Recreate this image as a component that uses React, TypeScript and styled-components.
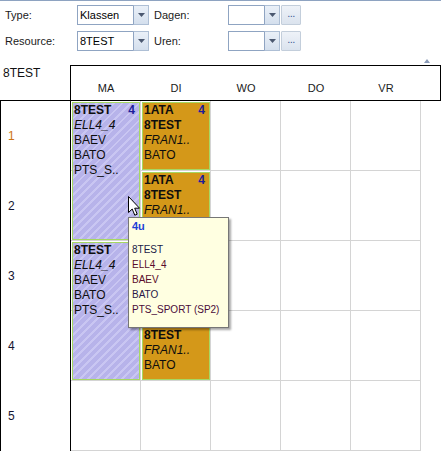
import styled, { createGlobalStyle } from "styled-components";

const GlobalStyle = createGlobalStyle`
  body {
    margin: 0;
    background: #ffffff;
    font-family: "Liberation Sans", Arial, sans-serif;
  }
`;

type Lesson = {
  id: number;
  col: number;
  row: number;
  span: number;
  kind: "class" | "lesson";
  lines: { text: string; bold?: boolean; italic?: boolean; count?: string }[];
};

const LESSONS: Lesson[] = [
  {
    id: 1,
    col: 1,
    row: 1,
    span: 2,
    kind: "class",
    lines: [
      { text: "8TEST", bold: true, count: "4" },
      { text: "ELL4_4", italic: true },
      { text: "BAEV" },
      { text: "BATO" },
      { text: "PTS_S.." },
    ],
  },
  {
    id: 2,
    col: 1,
    row: 3,
    span: 2,
    kind: "class",
    lines: [
      { text: "8TEST", bold: true, count: "4" },
      { text: "ELL4_4", italic: true },
      { text: "BAEV" },
      { text: "BATO" },
      { text: "PTS_S.." },
    ],
  },
  ...[1, 2, 3, 4].map((row) => ({
    id: 10 + row,
    col: 2,
    row,
    span: 1,
    kind: "lesson" as const,
    lines: [
      { text: "1ATA", bold: true, count: "4" },
      { text: "8TEST", bold: true },
      { text: "FRAN1..", italic: true },
      { text: "BATO" },
    ],
  })),
];

const DAYS = ["MA", "DI", "WO", "DO", "VR"];
const HOURS = [1, 2, 3, 4, 5];

const TIP_LINES = [
  { text: "8TEST", color: "#1c1c48" },
  { text: "ELL4_4", color: "#5a0c2c" },
  { text: "BAEV", color: "#5a0c2c" },
  { text: "BATO", color: "#2a1848" },
  { text: "PTS_SPORT (SP2)", color: "#4a0c3a" },
];

function Combo({ value, width }: { value: string; width: number }) {
  return (
    <ComboWrap>
      <ComboInput $width={width}>{value}</ComboInput>
      <DropButton>
        <svg width="7" height="4" viewBox="0 0 7 4">
          <path d="M0 0 H7 L3.5 4 Z" fill="#4b5870" />
        </svg>
      </DropButton>
    </ComboWrap>
  );
}

function App() {
  return (
    <Page>
      <GlobalStyle />
      <Toolbar>
        <FieldRow>
          <FieldLabel $width={72}>Type:</FieldLabel>
          <Combo value="Klassen" width={56} />
          <FieldLabel $width={74} $gap={5}>
            Dagen:
          </FieldLabel>
          <Combo value="" width={36} />
          <EllipsisButton>...</EllipsisButton>
        </FieldRow>
        <FieldRow>
          <FieldLabel $width={72}>Resource:</FieldLabel>
          <Combo value="8TEST" width={56} />
          <FieldLabel $width={74} $gap={5}>
            Uren:
          </FieldLabel>
          <Combo value="" width={36} />
          <EllipsisButton>...</EllipsisButton>
        </FieldRow>
      </Toolbar>

      <HeaderRow>
        <Corner>8TEST</Corner>
        <DaysBox>
          {DAYS.map((d) => (
            <DayLabel key={d}>{d}</DayLabel>
          ))}
        </DaysBox>
      </HeaderRow>

      <Body>
        <RowLabels>
          {HOURS.map((h) => (
            <RowLabel key={h} $color={h === 1 ? "#cc7412" : "#141430"}>
              {h}
            </RowLabel>
          ))}
        </RowLabels>
        <Grid>
          {HOURS.map((r) =>
            DAYS.map((d, c) => <Cell key={d + r} $col={c + 1} $row={r} />)
          )}
          {LESSONS.map((l) => (
            <Block key={l.id} $col={l.col} $row={l.row} $span={l.span} $kind={l.kind}>
              {l.lines.map((line, i) => (
                <BlockLine key={i} $bold={line.bold} $italic={line.italic}>
                  <span>{line.text}</span>
                  {line.count && <Count>{line.count}</Count>}
                </BlockLine>
              ))}
            </Block>
          ))}
        </Grid>
      </Body>

      <ScrollHint>
        <svg width="6" height="4" viewBox="0 0 6 4">
          <path d="M0 4 L3 0 L6 4 Z" fill="#8a9bb8" />
        </svg>
      </ScrollHint>

      <Tooltip>
        <TipTitle>4u</TipTitle>
        {TIP_LINES.map((t) => (
          <TipLine key={t.text} $color={t.color}>
            {t.text}
          </TipLine>
        ))}
      </Tooltip>

      <Cursor>
        <svg width="13" height="21" viewBox="0 0 13 21">
          <path
            d="M0.5 0.5 L0.5 16.5 L4.2 13 L6.8 19.2 L9.2 18.2 L6.7 12.2 L11.5 12.2 Z"
            fill="#ffffff"
            stroke="#000000"
            strokeWidth="1"
            strokeLinejoin="miter"
          />
        </svg>
      </Cursor>
    </Page>
  );
}

export default App;

const Page = styled.div`
  position: relative;
  width: 441px;
  height: 451px;
  overflow: hidden;
  background: #ffffff;
  color: #111111;
`;

const Toolbar = styled.div`
  box-sizing: border-box;
  height: 57px;
  border-top: 1px solid #8ea3c1;
  padding: 4px 0 0 5px;
  display: flex;
  flex-direction: column;
  gap: 6px;
`;

const FieldRow = styled.div`
  display: flex;
  align-items: center;
  height: 20px;
`;

const FieldLabel = styled.div<{ $width: number; $gap?: number }>`
  width: ${(p) => p.$width}px;
  margin-left: ${(p) => p.$gap ?? 0}px;
  font-size: 11px;
  color: #1b1b1b;
`;

const ComboWrap = styled.div`
  display: flex;
  height: 20px;
`;

const ComboInput = styled.div<{ $width: number }>`
  box-sizing: border-box;
  width: ${(p) => p.$width}px;
  height: 20px;
  border: 1px solid #8fa4c2;
  border-right: none;
  padding-left: 2px;
  font-size: 11px;
  line-height: 18px;
  color: #000000;
  background: #ffffff;
`;

const DropButton = styled.div`
  box-sizing: border-box;
  width: 16px;
  height: 20px;
  border: 1px solid #aebfd5;
  border-left: 1px solid #8fa4c2;
  background: linear-gradient(#eaf0f8, #d4dfed);
  display: flex;
  align-items: center;
  justify-content: center;
`;

const EllipsisButton = styled.div`
  box-sizing: border-box;
  width: 20px;
  height: 20px;
  margin-left: 1px;
  border: 1px solid #c3cedb;
  border-radius: 1px;
  background: linear-gradient(#eef2f8, #dbe3ee);
  font-size: 11px;
  line-height: 14px;
  text-align: center;
  color: #3d5c96;
  letter-spacing: -0.5px;
`;

const HeaderRow = styled.div`
  display: flex;
  align-items: flex-end;
  height: 44px;
`;

const Corner = styled.div`
  box-sizing: border-box;
  width: 70px;
  height: 44px;
  border-bottom: 1px solid #000000;
  padding: 9px 0 0 3px;
  font-size: 12px;
`;

const DaysBox = styled.div`
  box-sizing: border-box;
  width: 371px;
  height: 36px;
  border: 1px solid #000000;
  display: flex;
`;

const DayLabel = styled.div`
  width: 70px;
  padding-top: 16px;
  text-align: center;
  font-size: 11px;
  color: #1a1a1a;
`;

const Body = styled.div`
  display: flex;
`;

const RowLabels = styled.div`
  box-sizing: border-box;
  width: 71px;
  border-left: 1px solid #000000;
  border-right: 1px solid #000000;
  display: grid;
  grid-template-rows: repeat(5, 70px);
`;

const RowLabel = styled.div<{ $color: string }>`
  display: flex;
  align-items: center;
  padding-left: 7px;
  font-size: 12px;
  color: ${(p) => p.$color};
`;

const Grid = styled.div`
  display: grid;
  grid-template-columns: repeat(5, 70px);
  grid-template-rows: repeat(5, 70px);
`;

const Cell = styled.div<{ $col: number; $row: number }>`
  grid-column: ${(p) => p.$col};
  grid-row: ${(p) => p.$row};
  border-right: 1px solid #d4d4d4;
  border-bottom: 1px solid #d4d4d4;
`;

const Block = styled.div<{ $col: number; $row: number; $span: number; $kind: "class" | "lesson" }>`
  grid-column: ${(p) => p.$col};
  grid-row: ${(p) => p.$row} / span ${(p) => p.$span};
  z-index: 1;
  margin: 1px 1px 1px 1px;
  border: 1px solid #a6d862;
  padding: 0 4px 0 1px;
  overflow: hidden;
  font-size: 12px;
  line-height: 15px;
  color: #0e0e0e;
  background: ${(p) =>
    p.$kind === "class"
      ? "repeating-linear-gradient(135deg, #b7b3ea 0px, #b7b3ea 4px, #c9c6f2 4px, #c9c6f2 6px)"
      : "#d49819"};
`;

const BlockLine = styled.div<{ $bold?: boolean; $italic?: boolean }>`
  display: flex;
  justify-content: space-between;
  white-space: nowrap;
  font-weight: ${(p) => (p.$bold ? 700 : 400)};
  font-style: ${(p) => (p.$italic ? "italic" : "normal")};
`;

const Count = styled.span`
  color: #1c1c9a;
  font-weight: 700;
`;

const ScrollHint = styled.div`
  position: absolute;
  left: 424px;
  top: 58px;
  line-height: 0;
`;

const Tooltip = styled.div`
  position: absolute;
  left: 128px;
  top: 217px;
  z-index: 5;
  box-sizing: border-box;
  width: 101px;
  height: 111px;
  border: 1px solid #767676;
  background: #ffffe1;
  box-shadow: 2px 2px 2px rgba(0, 0, 0, 0.35);
  padding: 1px 0 0 3px;
`;

const TipTitle = styled.div`
  font-size: 11px;
  line-height: 14px;
  font-weight: 700;
  color: #1d3fd6;
  margin-bottom: 9px;
`;

const TipLine = styled.div<{ $color: string }>`
  font-size: 10px;
  line-height: 15px;
  color: ${(p) => p.$color};
  white-space: nowrap;
`;

const Cursor = styled.div`
  position: absolute;
  left: 128px;
  top: 196px;
  z-index: 6;
  line-height: 0;
`;
